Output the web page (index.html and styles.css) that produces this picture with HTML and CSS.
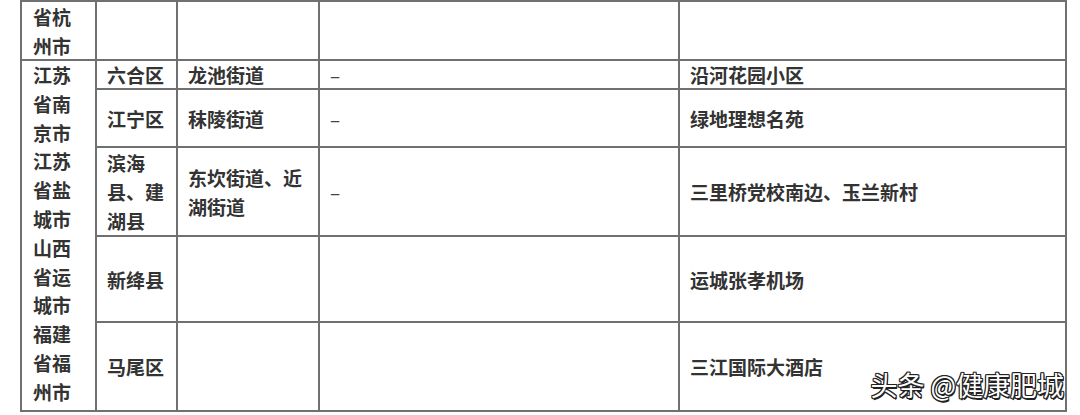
FILE: index.html
```html
<!DOCTYPE html>
<html lang="zh">
<head>
<meta charset="utf-8">
<link rel="stylesheet" href="styles.css">
</head>
<body>
<div class="page">
  <div class="grid">
    <div class="cell city mid">省杭<br>州市</div>
    <div class="cell"></div>
    <div class="cell"></div>
    <div class="cell"></div>
    <div class="cell"></div>

    <div class="cell city big">江苏<br>省南<br>京市<br>江苏<br>省盐<br>城市<br>山西<br>省运<br>城市<br>福建<br>省福<br>州市</div>
    <div class="cell">六合区</div>
    <div class="cell">龙池街道</div>
    <div class="cell dash">–</div>
    <div class="cell">沿河花园小区</div>

    <div class="cell">江宁区</div>
    <div class="cell">秣陵街道</div>
    <div class="cell dash">–</div>
    <div class="cell">绿地理想名苑</div>

    <div class="cell">滨海<br>县、建<br>湖县</div>
    <div class="cell">东坎街道、近<br>湖街道</div>
    <div class="cell dash">–</div>
    <div class="cell">三里桥党校南边、玉兰新村</div>

    <div class="cell">新绛县</div>
    <div class="cell"></div>
    <div class="cell"></div>
    <div class="cell">运城张孝机场</div>

    <div class="cell">马尾区</div>
    <div class="cell"></div>
    <div class="cell"></div>
    <div class="cell">三江国际大酒店</div>
  </div>
  <div class="mark">头条 @健康肥城</div>
</div>
</body>
</html>
```

FILE: styles.css
```css
html, body {
  margin: 0;
  padding: 0;
  background: #ffffff;
}
.page {
  position: relative;
  width: 1080px;
  height: 415px;
  overflow: hidden;
  padding: 0 0 0 20px;
  box-sizing: border-box;
}
.grid {
  display: grid;
  width: 1047px;
  box-sizing: border-box;
  padding: 2px;
  gap: 2px;
  background: #707070;
  grid-template-columns: 73px 79px 140px 358px 385px;
  grid-template-rows: 57px 27px 56px 87px 84px 87px;
  font-family: "Noto Sans CJK SC", "Noto Sans", sans-serif;
  font-size: 19px;
  font-weight: 700;
  color: #333333;
  line-height: 29px;
}
.cell {
  background: #ffffff;
  display: flex;
  flex-direction: column;
  justify-content: center;
  padding-left: 10px;
  white-space: nowrap;
}
.city {
  padding-left: 11px;
}
.big {
  grid-column: 1;
  grid-row: 2 / 7;
  justify-content: flex-start;
  line-height: 28.8px;
}
.dash {
  font-weight: 400;
  color: #444444;
}
.mark {
  position: absolute;
  right: 16px;
  bottom: 15px;
  font-family: "Noto Sans CJK SC", sans-serif;
  font-size: 27px;
  line-height: 30px;
  color: #ffffff;
  text-shadow: -1px -1px 0 #222, 1px -1px 0 #222, -1px 1px 0 #222, 1px 1px 0 #222, 1px 0 0 #222, -1px 0 0 #222, 0 1px 0 #222, 0 -1px 0 #222, 1px 2px 0 #222;
}
```
